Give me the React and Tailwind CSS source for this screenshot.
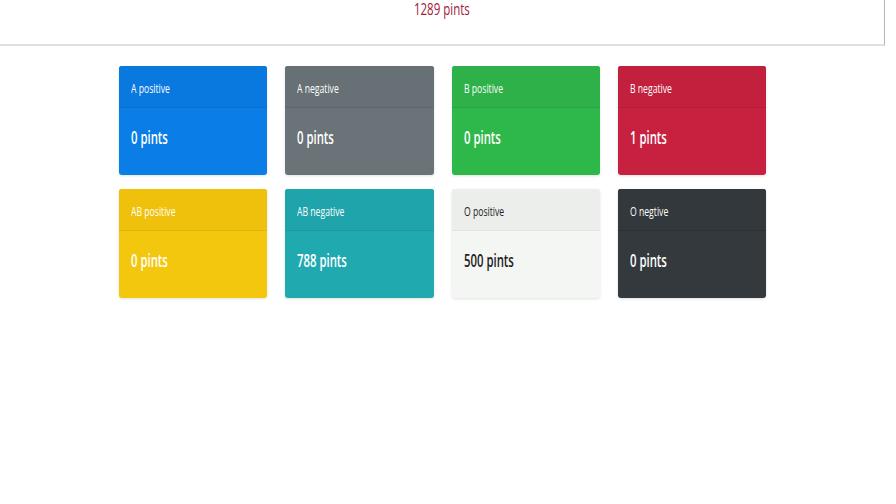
import React from 'react';

const GROUPS = [
  { label: 'A positive', pints: 0, card: 'bg-[#0a7de6] text-white', head: 'bg-[#0978df] border-[#0a6fcf]' },
  { label: 'A negative', pints: 0, card: 'bg-[#6a7377] text-white', head: 'bg-[#677074] border-[#5e676b]' },
  { label: 'B positive', pints: 0, card: 'bg-[#2eb84a] text-white', head: 'bg-[#2db148] border-[#29a343]' },
  { label: 'B negative', pints: 1, card: 'bg-[#c8213f] text-white', head: 'bg-[#c3203d] border-[#b41d38]' },
  { label: 'AB positive', pints: 0, card: 'bg-[#f4c70f] text-white', head: 'bg-[#efc10c] border-[#e3b40a]' },
  { label: 'AB negative', pints: 788, card: 'bg-[#21a9b0] text-white', head: 'bg-[#20a4ab] border-[#1e99a0]' },
  { label: 'O positive', pints: 500, card: 'bg-[#f4f6f4] text-[#222]', head: 'bg-[#eceeec] border-[#e2e4e2]' },
  { label: 'O negtive', pints: 0, card: 'bg-[#33393c] text-white', head: 'bg-[#32383b] border-[#2b3033]' },
];

function Card({ g }) {
  return (
    <div className={`rounded-[3px] overflow-hidden shadow-[0_1px_3px_rgba(0,0,0,0.12)] ${g.card}`}>
      <div className={`h-[42px] flex items-center px-3 pt-[4px] border-b ${g.head}`}>
        <span className="inline-block origin-left scale-x-[0.72] text-[12px] whitespace-nowrap">{g.label}</span>
      </div>
      <div className="h-[67px] flex items-center px-3 pb-[8px]">
        <span className="inline-block origin-left scale-x-[0.63] text-[18px] font-semibold whitespace-nowrap">
          {g.pints} pints
        </span>
      </div>
    </div>
  );
}

export default function App() {
  return (
    <div className="w-[896px] h-[504px] bg-white overflow-hidden" style={{ fontFamily: '"Open Sans", "Noto Sans", sans-serif' }}>
      <div className="w-[885px] h-[46px] border-r border-b-2 border-r-[#b8b0b4] border-b-[#e4dde0] flex justify-center">
        <span className="inline-block scale-x-[0.72] text-[16px] text-[#a4203c] leading-[19px]">1289 pints</span>
      </div>
      <div className="w-[647px] ml-[119px] mt-[20px] grid grid-cols-4 gap-x-[18px] gap-y-[14px]">
        {GROUPS.map(g => (
          <Card key={g.label} g={g} />
        ))}
      </div>
    </div>
  );
}
